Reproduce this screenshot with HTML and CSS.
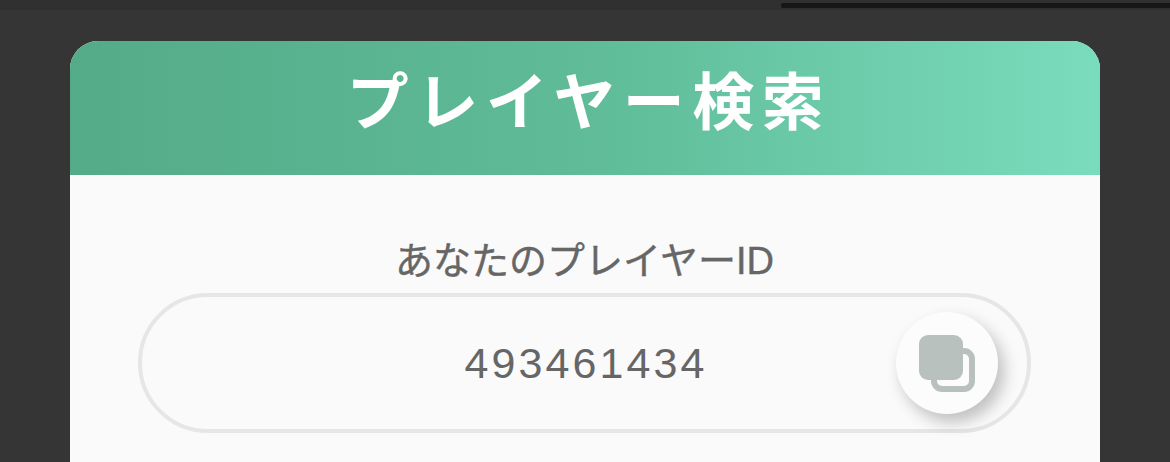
FILE: index.html
```html
<!DOCTYPE html>
<html lang="ja">
<head>
<meta charset="utf-8">
<title>プレイヤー検索</title>
<link rel="stylesheet" href="styles.css">
</head>
<body>
<div class="statusbar"><div class="statusbar-line"></div></div>
<main class="card">
  <header class="card-header"><h1 class="card-title">プレイヤー検索</h1></header>
  <section class="card-body">
    <p class="id-label">あなたのプレイヤーID</p>
    <div class="id-pill">
      <span class="id-value">493461434</span>
      <button class="copy-button" type="button" aria-label="コピー">
        <svg class="copy-icon" viewBox="0 0 56 57" width="56" height="57" aria-hidden="true">
          <rect x="15" y="16" width="38" height="38" rx="8" fill="none" stroke="#b8c1bd" stroke-width="6"/>
          <rect x="0" y="0" width="44" height="45" rx="9" fill="#b8c1bd"/>
        </svg>
      </button>
    </div>
  </section>
</main>
</body>
</html>
```
FILE: styles.css
```css
* { box-sizing: border-box; }
html, body { margin: 0; height: 100%; overflow: hidden; }
body {
  background: #353535;
  font-family: "Liberation Sans", "Noto Sans CJK JP", sans-serif;
}
.statusbar {
  height: 10px;
  background: #303030;
  display: flex;
  justify-content: flex-end;
  align-items: flex-start;
}
.statusbar-line {
  width: 389px;
  height: 5px;
  margin-top: 3px;
  border-radius: 2px 0 0 2px;
  background: #161616;
}
.card {
  width: 1030px;
  margin: 31px 0 0 70px;
  border-radius: 28px 28px 0 0;
  overflow: hidden;
  background: #fafafa;
}
.card-header {
  height: 134px;
  background: linear-gradient(90deg, #54ab88, #5fbb98 50%, #79dcbc);
  display: flex;
  justify-content: center;
  align-items: center;
}
.card-title {
  margin: 0;
  padding: 0 0 20px 8px;
  color: #fff;
  font-family: "Noto Sans CJK JP", sans-serif;
  font-size: 62px;
  font-weight: 700;
  line-height: 1;
  letter-spacing: 7.5px;
}
.card-body {
  height: 300px;
  padding: 62px 69px 0 68px;
}
.id-label {
  margin: 0 0 8px;
  color: #666;
  font-size: 38px;
  font-weight: 400;
  line-height: 48px;
  text-align: center;
  -webkit-text-stroke: 0.4px #666;
}
.id-pill {
  height: 140px;
  border: 4px solid #e6e6e6;
  border-radius: 70px;
  display: flex;
  justify-content: center;
  align-items: center;
  position: relative;
}
.id-value {
  padding-left: 3px;
  color: #666;
  font-size: 43px;
  letter-spacing: 3.1px;
}
.copy-button {
  position: absolute;
  right: 29px;
  top: 15px;
  width: 102px;
  height: 102px;
  padding: 0;
  border: 0;
  border-radius: 50%;
  background: #fcfcfc;
  box-shadow: 6px 8px 16px rgba(0, 0, 0, .24);
  display: flex;
  justify-content: center;
  align-items: center;
}
.copy-icon { display: block; overflow: visible; }
```
